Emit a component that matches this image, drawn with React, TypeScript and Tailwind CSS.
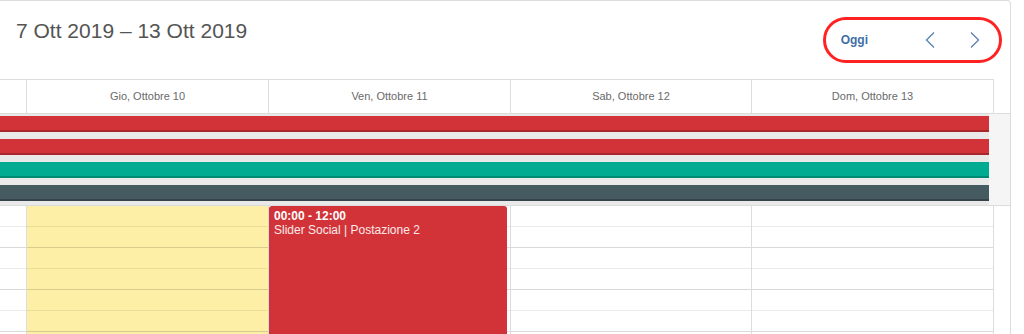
const DAYS = [
  { label: "Gio, Ottobre 10", w: "w-[242px]", today: true },
  { label: "Ven, Ottobre 11", w: "w-[242px]", today: false },
  { label: "Sab, Ottobre 12", w: "w-[241px]", today: false },
  { label: "Dom, Ottobre 13", w: "w-[242px]", today: false },
];

const BARS = [
  "bg-[#d13338] border-[#a8272b]",
  "bg-[#d13338] border-[#a8272b]",
  "bg-[#00ab91] border-[#008a74]",
  "bg-[#465a61] border-[#34444a]",
];

function Chevron({ dir }: { dir: "left" | "right" }) {
  return (
    <svg width="10" height="16" viewBox="0 0 10 16" fill="none">
      <path
        d={dir === "left" ? "M9 0.5 L1.5 8 L9 15.5" : "M1 0.5 L8.5 8 L1 15.5"}
        stroke="#5a7fb0"
        strokeWidth="1.3"
      />
    </svg>
  );
}

function Rows({ count = 7 }: { count?: number }) {
  return (
    <>
      {Array.from({ length: count }).map((_, i) => (
        <div
          key={i}
          className={`h-[21px] border-b ${i % 2 === 0 ? "border-black/[0.08]" : "border-black/[0.15]"}`}
        />
      ))}
    </>
  );
}

export default function App() {
  return (
    <div className="w-[1024px] h-[334px] overflow-hidden bg-white font-['Liberation_Sans',Arial,sans-serif]">
      <div className="relative w-[1011px] h-[340px] border-t border-r border-[#dcdcdc] rounded-tr-[4px]">
        {/* Toolbar */}
        <div className="flex h-[78px] items-start justify-between">
          <h2 className="pl-4 pt-[18px] text-[21px] leading-[24px] text-[#545454]">
            7 Ott 2019 – 13 Ott 2019
          </h2>
          <div className="mt-[31px] mr-[30px] flex h-[16px] items-center">
            <span className="text-[12px] leading-[16px] font-bold text-[#3f6ea6]">Oggi</span>
            <span className="ml-[57px]">
              <Chevron dir="left" />
            </span>
            <span className="ml-[35px]">
              <Chevron dir="right" />
            </span>
          </div>
        </div>

        {/* annotation */}
        <div className="absolute left-[823px] top-[16px] h-[46px] w-[179px] rounded-full border-[3px] border-[#ff2222]" />

        {/* Column headers */}
        <div className="flex border-b border-[#dcdcdc]">
          <div className="flex border-t border-[#dcdcdc]">
            <div className="h-[33px] w-[27px] border-r border-[#dcdcdc]" />
            {DAYS.map((d) => (
              <div
                key={d.label}
                className={`${d.w} flex h-[33px] items-center justify-center border-r border-[#dcdcdc] text-[11px] text-[#6a6a6a]`}
              >
                {d.label}
              </div>
            ))}
          </div>
        </div>

        {/* All-day events */}
        <div className="flex border-b border-[#dcdcdc] bg-[#f5f5f5]">
          <div className="flex w-[989px] flex-col gap-[7px] bg-[#e9e9e9] pt-[2px] pb-[4px]">
            {BARS.map((c, i) => (
              <div key={i} className={`h-[16px] border-b-2 ${c}`} />
            ))}
          </div>
        </div>

        {/* Time grid */}
        <div className="flex">
          <div className="w-[27px] border-r border-[#dcdcdc]">
            <Rows />
          </div>
          {DAYS.map((d, i) => (
            <div
              key={d.label}
              className={`${d.w} relative border-r border-[#dcdcdc] ${d.today ? "bg-[#fdf0a6]" : "bg-white"}`}
            >
              <Rows />
              {i === 1 && (
                <div className="absolute top-0 left-0 right-[3px] bottom-0 rounded-t-[3px] bg-[#d13338] px-[5px] pt-[3px] text-[12px] leading-[14px] text-white">
                  <div className="font-bold">00:00 - 12:00</div>
                  <div className="text-white/90">Slider Social | Postazione 2</div>
                </div>
              )}
            </div>
          ))}
          <div className="flex-1" />
        </div>
      </div>
    </div>
  );
}
